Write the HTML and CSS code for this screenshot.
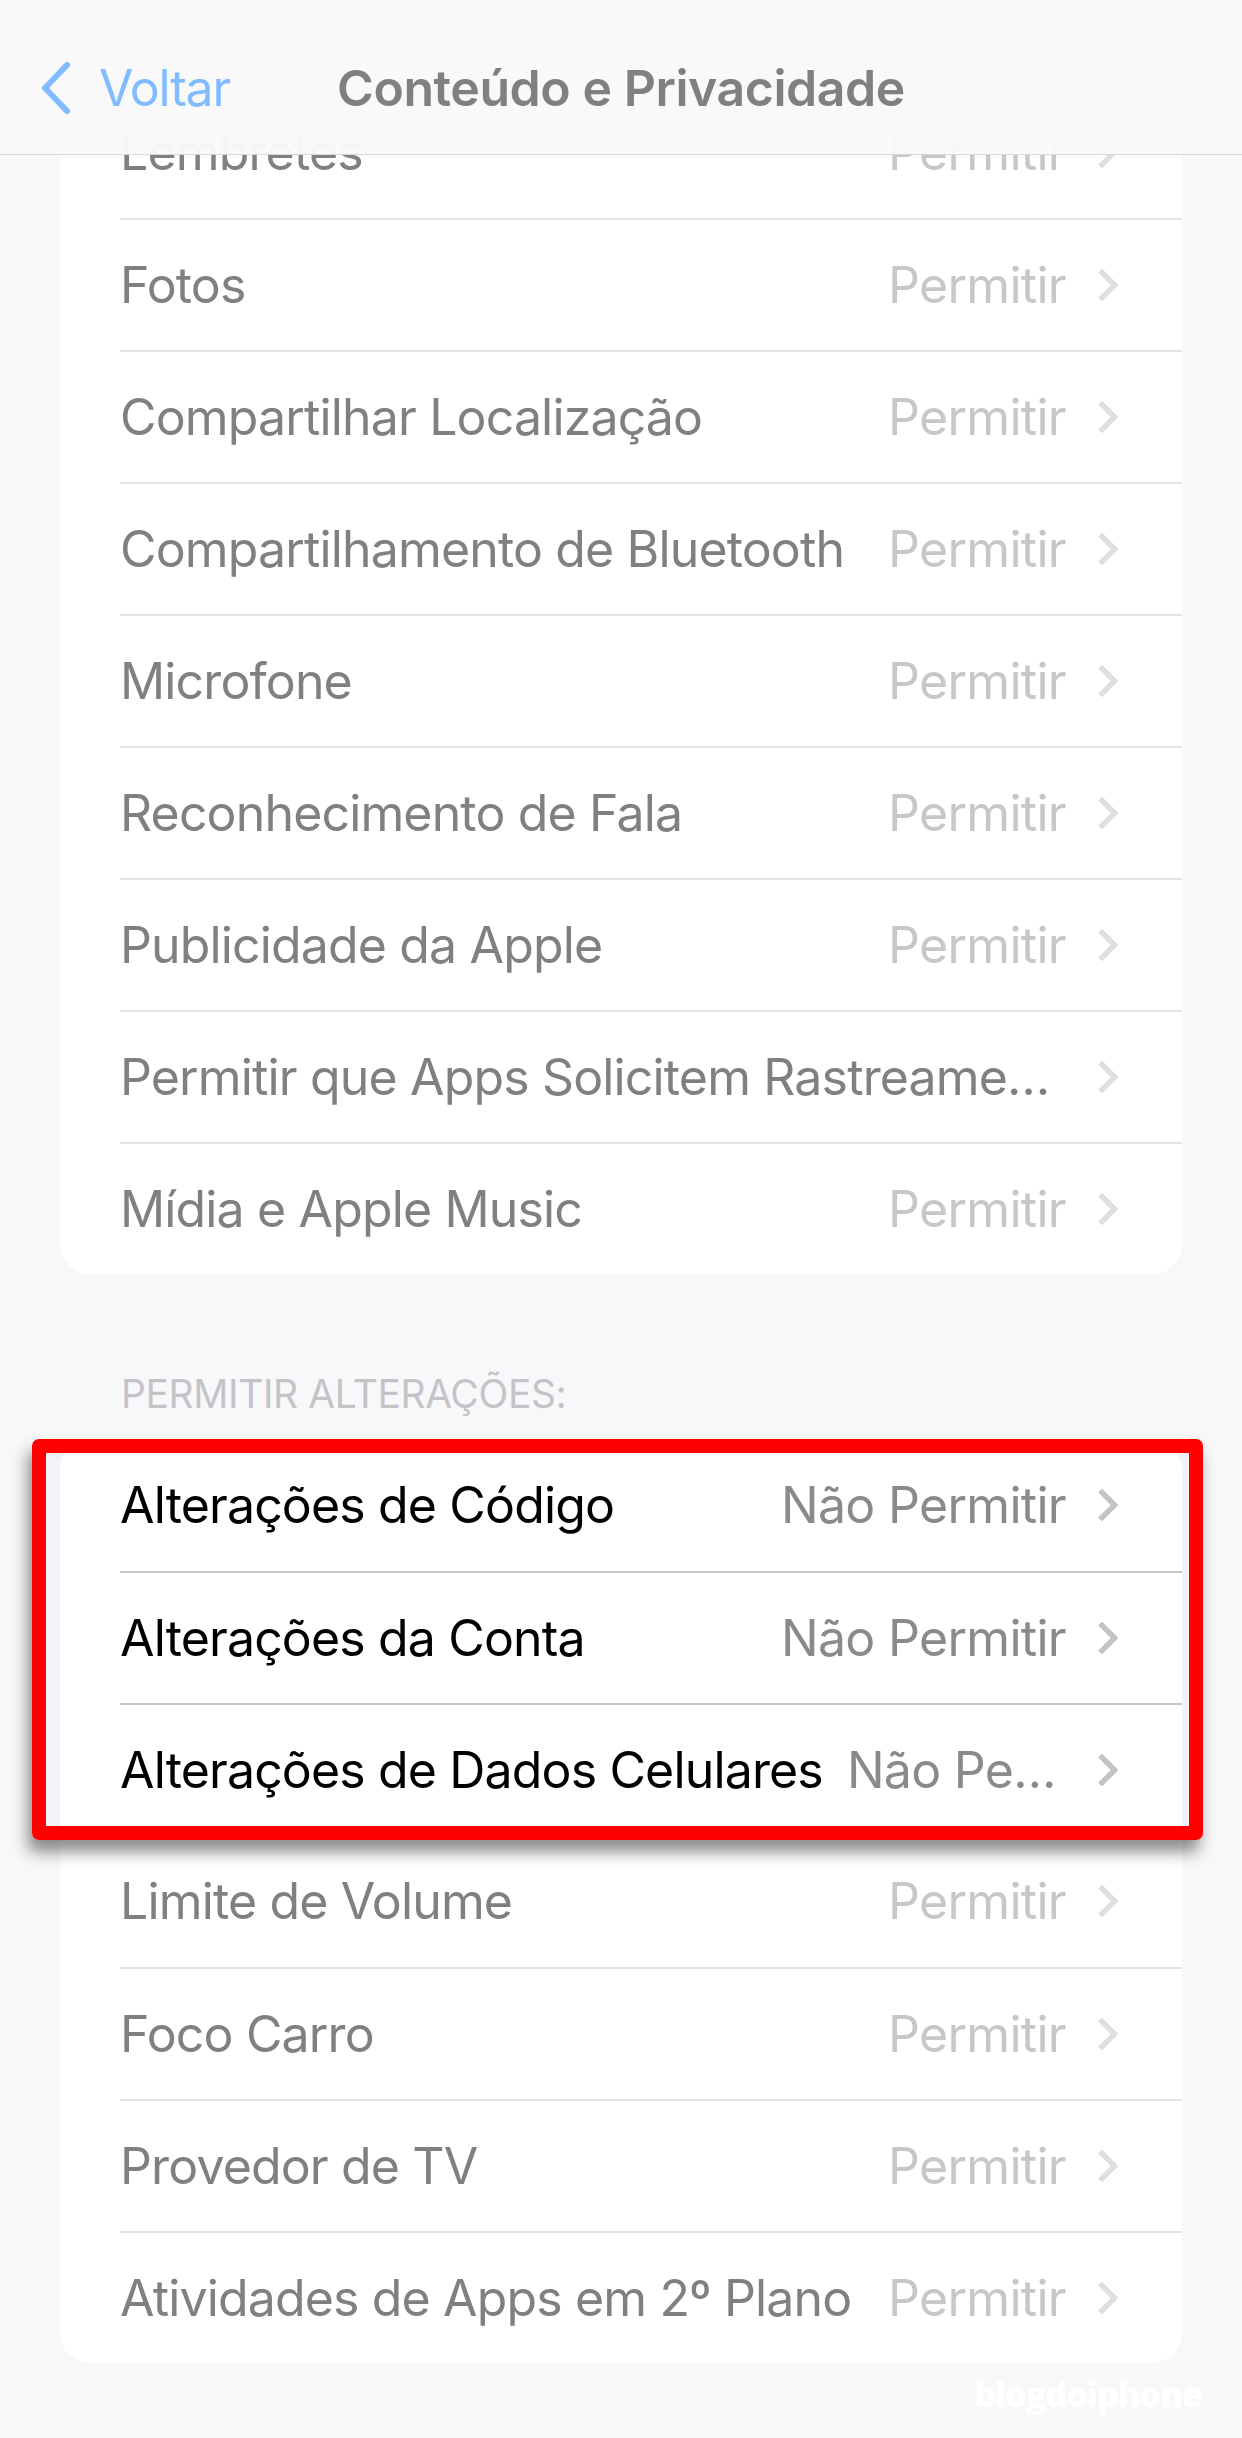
FILE: index.html
```html
<!DOCTYPE html>
<html lang="pt-BR">
<head>
  <meta charset="UTF-8">
  <title>Conteúdo e Privacidade</title>
  <link rel="stylesheet" href="styles.css">
</head>
<body>

  <header class="navbar">
    <a class="back">
      <svg class="back-chev" width="34" height="54" viewBox="0 0 34 54">
        <path d="M28 4 L6 27 L28 50" fill="none" stroke="currentColor" stroke-width="6" stroke-linecap="round" stroke-linejoin="round"/>
      </svg>
      <span>Voltar</span>
    </a>
    <h1 class="title">Conteúdo e Privacidade</h1>
  </header>

  <main class="page">

    <section class="card">
      <div class="row"><div class="cell"><span class="label">Lembretes</span><span class="value">Permitir</span><i class="chev"></i></div></div>
      <div class="row"><div class="cell"><span class="label">Fotos</span><span class="value">Permitir</span><i class="chev"></i></div></div>
      <div class="row"><div class="cell"><span class="label">Compartilhar Localização</span><span class="value">Permitir</span><i class="chev"></i></div></div>
      <div class="row"><div class="cell"><span class="label">Compartilhamento de Bluetooth</span><span class="value">Permitir</span><i class="chev"></i></div></div>
      <div class="row"><div class="cell"><span class="label">Microfone</span><span class="value">Permitir</span><i class="chev"></i></div></div>
      <div class="row"><div class="cell"><span class="label">Reconhecimento de Fala</span><span class="value">Permitir</span><i class="chev"></i></div></div>
      <div class="row"><div class="cell"><span class="label">Publicidade da Apple</span><span class="value">Permitir</span><i class="chev"></i></div></div>
      <div class="row"><div class="cell"><span class="label trunc">Permitir que Apps Solicitem Rastreamento</span><i class="chev"></i></div></div>
      <div class="row"><div class="cell"><span class="label">Mídia e Apple Music</span><span class="value">Permitir</span><i class="chev"></i></div></div>
    </section>

    <h2 class="section-head">PERMITIR ALTERAÇÕES:</h2>

    <section class="card">
      <div class="focus">
        <div class="row hl"><div class="cell"><span class="label">Alterações de Código</span><span class="value">Não Permitir</span><i class="chev"></i></div></div>
        <div class="row hl"><div class="cell"><span class="label">Alterações da Conta</span><span class="value">Não Permitir</span><i class="chev"></i></div></div>
        <div class="row hl"><div class="cell"><span class="label keep">Alterações de Dados Celulares</span><span class="value trunc">Não Permitir</span><i class="chev"></i></div></div>
      </div>
      <div class="row"><div class="cell"><span class="label">Limite de Volume</span><span class="value">Permitir</span><i class="chev"></i></div></div>
      <div class="row"><div class="cell"><span class="label">Foco Carro</span><span class="value">Permitir</span><i class="chev"></i></div></div>
      <div class="row"><div class="cell"><span class="label">Provedor de TV</span><span class="value">Permitir</span><i class="chev"></i></div></div>
      <div class="row"><div class="cell"><span class="label">Atividades de Apps em 2º Plano</span><span class="value">Permitir</span><i class="chev"></i></div></div>
    </section>

    <div class="watermark">blogdoiphone</div>
  </main>

</body>
</html>
```

FILE: styles.css
```css
body {
  margin: 0;
  background-color: #f8f8fb;
  font-family: Inter, "Noto Sans", sans-serif;
  color: #808080;
}

/* barra de navegação por cima do conteúdo */
.navbar {
  position: fixed;
  top: 0;
  left: 0;
  right: 0;
  height: 154px;
  background-color: rgba(249, 249, 249, 0.97);
  border-bottom: 1px solid #d8d8db;
  z-index: 10;
}
.back {
  position: absolute;
  left: 39px;
  top: 61px;
  display: flex;
  align-items: center;
  gap: 26px;
  color: #80bcff;
  font-size: 50px;
  letter-spacing: -1.2px;
}
.back span {
  line-height: 52px;
}
.title {
  margin: 0;
  padding-top: 22px;
  text-align: center;
  line-height: 132px;
  font-size: 50px;
  font-weight: 600;
  letter-spacing: -0.45px;
  color: #808080;
}

.page {
  padding-top: 86px;
  padding-bottom: 20px;
}

.card {
  margin: 0 60px;
  background-color: #fff;
  border-radius: 30px;
}

.row {
  display: flex;
  padding-left: 60px;
  height: 132px;
}
.cell {
  flex: 1;
  min-width: 0;
  display: flex;
  align-items: center;
  padding-right: 62px;
  border-top: 2px solid #e3e3e5;
}
.row:first-child .cell,
.focus + .row .cell {
  border-top: none;
}

.label {
  flex: 1;
  min-width: 0;
  font-size: 50px;
  letter-spacing: -0.85px;
  color: #808080;
  white-space: nowrap;
  overflow: hidden;
  text-overflow: ellipsis;
}
.label.keep {
  flex: 0 0 auto;
  margin-right: 24px;
}
.value {
  font-size: 50px;
  letter-spacing: -0.7px;
  color: #c7c7cb;
  white-space: nowrap;
  margin-left: 20px;
}
.value.trunc {
  flex: 1;
  min-width: 0;
  margin-left: 0;
  overflow: hidden;
  text-overflow: ellipsis;
}

.chev {
  width: 18px;
  height: 18px;
  margin-left: 24px;
  margin-right: 6px;
  border-top: 6px solid #dfdfe1;
  border-right: 6px solid #dfdfe1;
  border-radius: 3px;
  transform: rotate(45deg);
  flex: none;
}

/* linhas destacadas dentro da moldura vermelha */
.focus {
  position: relative;
}
.focus::before {
  content: "";
  position: absolute;
  left: -14px;
  right: -6px;
  top: 0;
  bottom: 0;
  background-color: #f2f2f7;
  z-index: -1;
}
.focus::after {
  content: "";
  position: absolute;
  left: -28px;
  right: -21px;
  top: 0;
  bottom: -5px;
  border: 14px solid #ff0000;
  border-radius: 7px;
  box-shadow: -4px 12px 16px rgba(0, 0, 0, 0.45);
  z-index: 5;
}
.hl .label {
  color: #000;
}
.hl .value {
  color: #8a8a8e;
}
.hl .cell {
  border-top-color: #c6c6c8;
}
.hl .chev {
  border-color: #c4c4c7;
}

.section-head {
  margin: 93px 0 0;
  padding: 0 0 18px 121px;
  font-size: 39px;
  font-weight: 400;
  letter-spacing: -0.4px;
  color: #c4c4c8;
  line-height: 54px;
}

.watermark {
  text-align: right;
  padding: 8px 40px 0 0;
  font-family: "Open Sans", sans-serif;
  font-weight: 800;
  font-size: 34px;
  color: #ffffff;
  letter-spacing: -1px;
}
```
